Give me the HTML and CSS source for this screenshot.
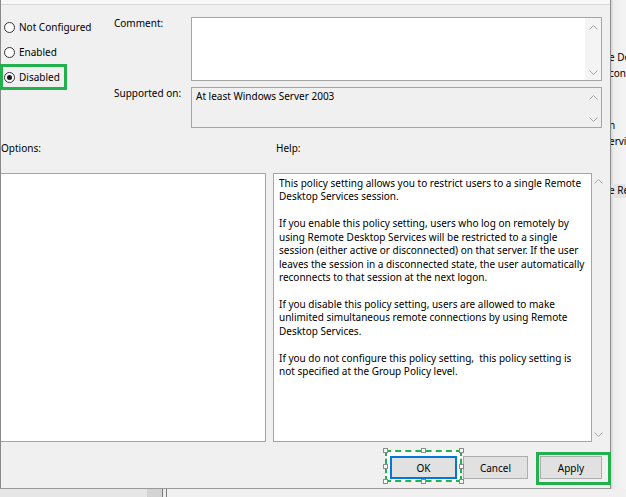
FILE: index.html
```html
<!DOCTYPE html>
<html>
<head>
<meta charset="utf-8">
<link rel="stylesheet" href="styles.css">
</head>
<body>
<div class="screen">
  <div class="main">
    <div class="dialog">
      <div class="topband"></div>
      <div class="top">
        <div class="radios">
          <div class="radio-row"><span class="radio"></span><span class="radio-text">Not Configured</span></div>
          <div class="radio-row"><span class="radio"></span><span class="radio-text">Enabled</span></div>
          <div class="radio-row annot-row"><span class="radio checked"></span><span class="radio-text">Disabled</span></div>
        </div>
        <div class="fields">
          <div class="field-label">Comment:</div>
          <div class="box comment-box">
            <div class="box-body"></div>
            <div class="vscroll">
              <svg class="arrow" viewBox="0 0 9 5"><polyline points="0.5,4.5 4.5,0.5 8.5,4.5"/></svg>
              <svg class="arrow" viewBox="0 0 9 5"><polyline points="0.5,0.5 4.5,4.5 8.5,0.5"/></svg>
            </div>
          </div>
          <div class="field-label">Supported on:</div>
          <div class="box supported-box">
            <div class="box-body supported-text">At least Windows Server 2003</div>
            <div class="vscroll">
              <svg class="arrow" viewBox="0 0 9 5"><polyline points="0.5,4.5 4.5,0.5 8.5,4.5"/></svg>
              <svg class="arrow" viewBox="0 0 9 5"><polyline points="0.5,0.5 4.5,4.5 8.5,0.5"/></svg>
            </div>
          </div>
        </div>
      </div>
      <div class="panes">
        <div class="pane options-pane">
          <div class="pane-label">Options:</div>
          <div class="box options-box"></div>
        </div>
        <div class="pane help-pane">
          <div class="pane-label help-label">Help:</div>
          <div class="help-wrap">
            <div class="box help-box">
              <p>This policy setting allows you to restrict users to a single Remote<br>Desktop Services session.</p>
              <p>If you enable this policy setting, users who log on remotely by<br>using Remote Desktop Services will be restricted to a single<br>session (either active or disconnected) on that server. If the user<br>leaves the session in a disconnected state, the user automatically<br>reconnects to that session at the next logon.</p>
              <p>If you disable this policy setting, users are allowed to make<br>unlimited simultaneous remote connections by using Remote<br>Desktop Services.</p>
              <p>If you do not configure this policy setting,&nbsp; this policy setting is<br>not specified at the Group Policy level.</p>
            </div>
            <div class="help-scroll">
              <svg class="arrow" viewBox="0 0 9 5"><polyline points="0.5,4.5 4.5,0.5 8.5,4.5"/></svg>
              <svg class="arrow" viewBox="0 0 9 5"><polyline points="0.5,0.5 4.5,4.5 8.5,0.5"/></svg>
            </div>
          </div>
        </div>
      </div>
      <div class="buttons">
        <div class="annot-dashed">
          <button class="btn btn-default">OK</button>
          <span class="handle h-tl"></span><span class="handle h-tm"></span><span class="handle h-tr"></span>
          <span class="handle h-ml"></span><span class="handle h-mr"></span>
          <span class="handle h-bl"></span><span class="handle h-bm"></span><span class="handle h-br"></span>
        </div>
        <button class="btn btn-cancel">Cancel</button>
        <div class="annot-solid">
          <button class="btn btn-apply">Apply</button>
        </div>
      </div>
    </div>
    <div class="side">
      <div class="side-line s1">e Do</div>
      <div class="side-line s2">con</div>
      <div class="side-line s3">n</div>
      <div class="side-line s4">ervi</div>
      <div class="side-line s5 side-band">e Re</div>
    </div>
  </div>
  <div class="bottom">
    <div class="bottom-left"></div>
    <div class="bottom-thumb"></div>
    <div class="bottom-line"></div>
    <div class="bottom-gap"></div>
    <div class="bottom-line"></div>
    <div class="bottom-rest"></div>
  </div>
</div>
</body>
</html>
```
FILE: styles.css
```css
* { box-sizing: border-box; }
html, body { margin: 0; padding: 0; }
body {
  width: 626px;
  height: 497px;
  overflow: hidden;
  font-family: "Noto Sans", "Open Sans", sans-serif;
  font-size: 10px;
  color: #000;
  background: #f0f0f0;
}
.screen { width: 626px; height: 497px; display: flex; flex-direction: column; }
.main { display: flex; height: 489px; }

.dialog {
  width: 611px;
  height: 489px;
  background: #f0f0f0;
  border-left: 1px solid #8a8a8a;
  border-right: 1px solid #8a8a8a;
  border-bottom: 1px solid #9a9a9a;
  display: flex;
  flex-direction: column;
}
.topband {
  height: 5px;
  background: #f7f7f7;
  border-bottom: 1px solid #d8d8d8;
  flex: none;
}

.top { display: flex; padding-top: 12px; }
.radios { width: 113px; margin-top: -2px; display: flex; flex-direction: column; }
.radio-row {
  height: 25px;
  display: flex;
  align-items: center;
  padding-left: 3px;
  gap: 4px;
  line-height: 13px;
}
.annot-row {
  width: 67px;
  margin-left: -1px;
  margin-top: -1px;
  height: 26px;
  border: 3px solid #22b14c;
  padding-left: 1px;
}
.radio {
  width: 11px;
  height: 11px;
  border: 1px solid #333;
  border-radius: 50%;
  background: #fff;
  flex: none;
  display: flex;
  align-items: center;
  justify-content: center;
}
.radio.checked::after {
  content: "";
  width: 5px;
  height: 5px;
  border-radius: 50%;
  background: #1a1a1a;
}

.fields {
  display: grid;
  grid-template-columns: 77px 411px;
  grid-template-rows: 64px 41px;
  row-gap: 6px;
}
.field-label { line-height: 10px; padding-top: 1px; white-space: nowrap; }
.box { border: 1px solid #a5a5a5; }
.comment-box, .supported-box { display: flex; }
.comment-box { background: #fff; }
.supported-box { background: #f0f0f0; }
.box-body { flex: 1; }
.supported-text { padding: 2px 0 0 4px; line-height: 13px; }
.vscroll {
  width: 16px;
  display: flex;
  flex-direction: column;
  justify-content: space-between;
  align-items: center;
  padding: 7px 0 5px 0;
}
.comment-box .vscroll { background: #f4f4f4; }
.arrow {
  width: 9px;
  height: 5px;
  display: block;
  fill: none;
  stroke: #a6a6a6;
  stroke-width: 1;
}

.panes { display: flex; margin-top: 13px; }
.pane { display: flex; flex-direction: column; }
.pane-label { line-height: 13.4px; height: 15px; padding-top: 1px; }
.help-label { padding-left: 3px; }
.options-pane { width: 265px; }
.options-box {
  margin-top: 17px;
  height: 269px;
  background: #fff;
  border-left: none;
}
.help-pane { margin-left: 7px; }
.help-wrap { display: flex; margin-top: 17px; height: 269px; }
.help-box {
  width: 319px;
  height: 269px;
  background: #fff;
  padding: 3px 0 0 5px;
  line-height: 13.43px;
  white-space: nowrap;
  overflow: hidden;
}
.help-box p { margin: 0 0 13.43px 0; }
.help-scroll {
  width: 18px;
  display: flex;
  flex-direction: column;
  justify-content: space-between;
  padding: 6px 0 5px 2px;
}

.buttons {
  display: flex;
  justify-content: flex-end;
  align-items: flex-start;
  margin-top: 8px;
}
.btn {
  font-family: inherit;
  font-size: 10px;
  color: #000;
  background: #e1e1e1;
  border: 1px solid #adadad;
  height: 23px;
  padding: 0;
  margin: 0;
  display: block;
}
.annot-dashed {
  position: relative;
  width: 77px;
  height: 32px;
  border: 2px dashed #22b14c;
  background: #ffffff;
  padding: 4px 3px 1px 3px;
}
.btn-default {
  width: 67px;
  border: 2px solid #0078d7;
}
.handle {
  position: absolute;
  width: 5px;
  height: 5px;
  background: #fff;
  border: 1px solid #8c8c8c;
}
.h-tl { left: -4px; top: -4px; }
.h-tm { left: 34px; top: -4px; }
.h-tr { right: -4px; top: -4px; }
.h-ml { left: -4px; top: 12px; }
.h-mr { right: -4px; top: 12px; }
.h-bl { left: -4px; bottom: -4px; }
.h-bm { left: 34px; bottom: -4px; }
.h-br { right: -4px; bottom: -4px; }
.btn-cancel { width: 65px; margin-left: 1px; margin-top: 6px; }
.annot-solid {
  margin-left: 8px;
  margin-right: -1px;
  margin-top: 2px;
  width: 75px;
  height: 33px;
  border: 3px solid #22b14c;
  padding: 1px 6px 0 1px;
}
.btn-apply { width: 62px; }

.side {
  width: 15px;
  height: 489px;
  background: linear-gradient(to right, #d5d5d5 0, #eeeeee 3px, #f3f3f3 100%);
  overflow: hidden;
  display: flex;
  flex-direction: column;
}
.side-line { line-height: 13px; height: 13px; white-space: nowrap; text-indent: -2px; }
.s1 { margin-top: 51px; }
.s2 { margin-top: 3px; }
.s3 { margin-top: 39px; }
.s4 { margin-top: 3px; }
.s5 { margin-top: 36px; }
.side-band { background: #e4e4e4; height: 14px; }

.bottom { display: flex; height: 8px; }
.bottom-left { width: 147px; background: #e6e6e6; }
.bottom-thumb { width: 15px; background: #d3d3d3; }
.bottom-line { width: 1px; background: #7d7d7d; }
.bottom-gap { width: 3px; background: #ececec; }
.bottom-rest { flex: 1; background: #f0f0f0; }
```
